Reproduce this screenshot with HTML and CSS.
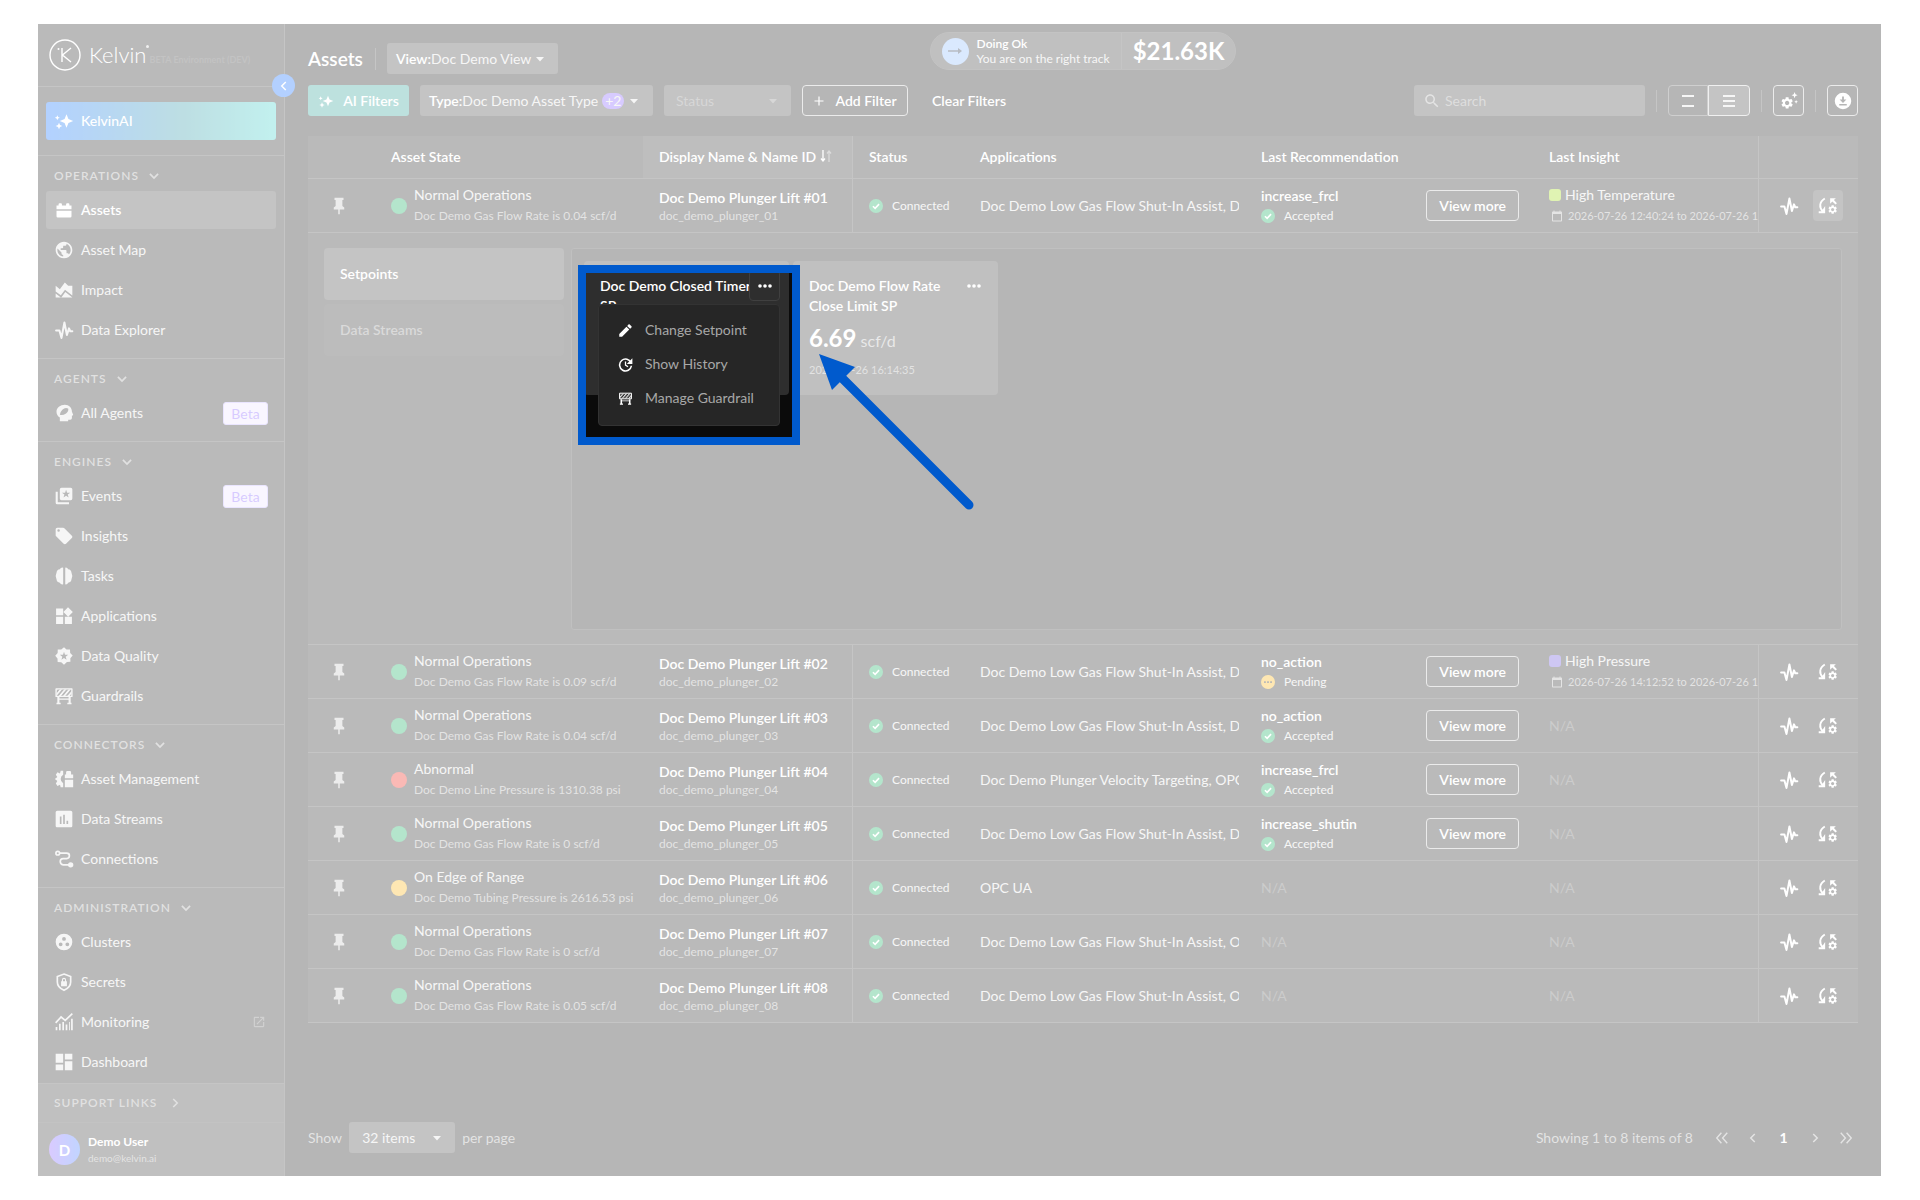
FILE: index.html
```html
<!DOCTYPE html>
<html lang="en">
<head>
<meta charset="utf-8">
<title>Assets - Kelvin</title>
<meta name="viewport" content="width=device-width, initial-scale=1">
<link rel="stylesheet" href="styles.css">
</head>
<body>
<svg class="sprite" aria-hidden="true">
  <defs>
    <pattern id="hatch" width="4" height="4" patternUnits="userSpaceOnUse" patternTransform="rotate(40)"><rect width="2" height="4" fill="currentColor"/></pattern>
    <symbol id="i-spark" viewBox="0 0 24 24"><path d="M15 4l2.300 5.700L23 12l-5.700 2.300L15 20l-2.300-5.700L7 12l5.700-2.300zM6 14l1.200 2.800L10 18l-2.800 1.200L6 22l-1.200-2.800L2 18l2.800-1.200zM4 5l.9 2.100L7 8l-2.100.9L4 11l-.9-2.100L1 8l2.100-.9z"/></symbol>
    <symbol id="i-asset" viewBox="0 0 24 24"><path d="M3 11V6.500h2.500V5.200Q5.500 4 6.700 4h1.600Q9.500 4 9.500 5.200v1.300h5V5.200q0-1.200 1.200-1.200h1.600q1.200 0 1.200 1.200v1.300H21V11zM3 13h18v6.500q0 1.500-1.500 1.500h-15Q3 21 3 19.500z"/></symbol>
    <symbol id="i-globe" viewBox="0 0 24 24"><path d="M12 2C6.480 2 2 6.480 2 12s4.480 10 10 10 10-4.480 10-10S17.520 2 12 2zm-1 17.930c-3.950-.49-7-3.850-7-7.930 0-.62.08-1.210.21-1.790L9 15v1c0 1.100.9 2 2 2v1.930zm6.900-2.540c-.26-.81-1-1.390-1.900-1.390h-1v-3c0-.55-.45-1-1-1H8v-2h2c.55 0 1-.45 1-1V7h2c1.100 0 2-.9 2-2v-.41c2.930 1.190 5 4.060 5 7.410 0 2.080-.8 3.970-2.100 5.390z"/></symbol>
    <symbol id="i-impact" viewBox="0 0 24 24"><path d="M2 7l5 4 6-8 4 4h5v11.500l-8.800-6.800-5 6.700L2 13.700zM2 21v-4.800l6.600 5 5-6.700L22 21z"/></symbol>
    <symbol id="i-pulse" viewBox="0 0 24 24"><path d="M2.500 12.500h4L9 21.500 12.500 3l3 15 2.500-8 1.500 3.500h2.500" fill="none" stroke="currentColor" stroke-width="2.400" stroke-linejoin="round" stroke-linecap="round"/></symbol>
    <symbol id="i-agent" viewBox="0 0 24 24"><path fill-rule="evenodd" d="M13 2c5 0 8.500 3.500 8.500 8.500L23 14q0 1-1.500 1V18q0 2-2 2H17v2H7v-4.500Q3 15 3 10.500C3 5.500 7.500 2 13 2zM7 14q3 1.500 7.500-1.500Q18 9.500 17 6.500 13 5 10 8q-3 3-3 6z"/></symbol>
    <symbol id="i-events" viewBox="0 0 24 24"><path fill-rule="evenodd" d="M9 2h11q2 0 2 2v11q0 2-2 2H9q-2 0-2-2V4q0-2 2-2zm5.500 2.500l-1.200 3.600H9.500l3 2.200-1.100 3.600 3.100-2.200 3.100 2.200-1.100-3.600 3-2.200h-3.800z"/><path d="M2 7h2.500v12.500H18V22H4q-2 0-2-2z"/></symbol>
    <symbol id="i-tag" viewBox="0 0 24 24"><path d="M5.500 7A1.500 1.500 0 0 1 4 5.500 1.500 1.500 0 0 1 5.500 4 1.500 1.500 0 0 1 7 5.500 1.500 1.500 0 0 1 5.500 7m15.910 4.580l-9-9C12.050 2.220 11.550 2 11 2H4c-1.110 0-2 .89-2 2v7c0 .55.22 1.050.59 1.410l8.990 9c.37.36.87.59 1.420.59s1.050-.23 1.410-.59l7-7c.37-.36.59-.86.59-1.410 0-.56-.23-1.060-.59-1.420z"/></symbol>
    <symbol id="i-tasks" viewBox="0 0 24 24"><path d="M11 2v20Q8 22.500 7 20q-3.500 0-4-4-2-4 0-8 .5-3.500 4-4 1-2.500 4-2zM13.500 2v20q2.500.5 3.500-2 3.500 0 4-4 2-4 0-8-.5-3.500-4-4-1-2.500-3.500-2z"/></symbol>
    <symbol id="i-apps" viewBox="0 0 24 24"><path d="M13 13v8.500h8.500V13zM2.500 21.500H11V13H2.500zM2.500 3v8H11V3zm14.300-1.500L11.300 7.200 17 12.800l5.600-5.600z"/></symbol>
    <symbol id="i-quality" viewBox="0 0 24 24"><path fill-rule="evenodd" d="M12 1.500l3 2.800 4.200-.2.200 4.200 3 3.200-2.800 3.200.1 4.300-4.200.2-3.500 3.300-3.300-3-4.300-.2-.2-4.200-2.700-3.400 2.900-3.200.1-4.200 4.200-.2zM12 7l-1.200 3.600H7l3 2.200-1.100 3.700 3.100-2.200 3.100 2.200-1.100-3.700 3-2.200h-3.800z"/></symbol>
    <symbol id="i-guard" viewBox="0 0 24 24"><path fill="url(#hatch)" d="M3 4h18v8H3z"/><path d="M2.500 3.500h19v9h-19z" fill="none" stroke="currentColor" stroke-width="1.600" stroke-linejoin="round"/><path d="M4 13h2.500v7H8v2H3v-2h1zM17.500 13H20v7h1v2h-5v-2h1.500zM4 15h16v1.500H4z"/></symbol>
    <symbol id="i-manage" viewBox="0 0 24 24"><path d="M11 2v5q-3 1.500-3 5t3 5v5H8l-.8-3-3 1.500-2-3L4 14.500 1 12l3-2.500L2.200 6.800l2-3 3 1.700L8 2zM13 11V6.500h1.500V4q0-1.500 1.500-1.500h3q1.500 0 1.500 1.500v2.500H23V11zM13 13h10v9H13z"/></symbol>
    <symbol id="i-chart" viewBox="0 0 24 24"><path d="M20 2H4c-1.100 0-2 .9-2 2v16c0 1.100.9 2 2 2h16c1.100 0 2-.9 2-2V4c0-1.100-.9-2-2-2zM9 18H7V9h2zm4 0h-2V7h2zm4 0h-2v-4h2z"/></symbol>
    <symbol id="i-connect" viewBox="0 0 24 24"><g fill="none" stroke="currentColor" stroke-width="2"><circle cx="4.500" cy="5" r="2.200"/><path d="M7 5h8q3.500 0 3.500 3T15 11.500h-4Q7.500 11.500 7.500 15T11 19h7"/></g><circle cx="20" cy="19" r="3.200"/></symbol>
    <symbol id="i-cluster" viewBox="0 0 24 24"><path fill-rule="evenodd" d="M12 2a10 10 0 1 0 0 20 10 10 0 0 0 0-20zM12 6a2.300 2.300 0 1 1 0 4.600A2.300 2.300 0 0 1 12 6zM8 12.500a2.300 2.300 0 1 1 0 4.600 2.300 2.300 0 0 1 0-4.600zm8 0a2.300 2.300 0 1 1 0 4.600 2.300 2.300 0 0 1 0-4.600z"/></symbol>
    <symbol id="i-secret" viewBox="0 0 24 24"><path d="M12 2.500l8 3v6.500q0 6.500-8 10Q4 18.500 4 12V5.500z" fill="none" stroke="currentColor" stroke-width="2"/><path fill-rule="evenodd" d="M8.500 11h1V9.500a2.500 2.500 0 0 1 5 0V11h1v6h-7zm2.300 0h2.400V9.500a1.200 1.200 0 0 0-2.400 0z"/></symbol>
    <symbol id="i-monitor" viewBox="0 0 24 24"><path d="M2 13l6.500-7 5 4L22 2" fill="none" stroke="currentColor" stroke-width="2"/><path d="M2 18h2v4H2zM6 14h2v8H6zM10 12h2v10h-2zM14 15h2v7h-2zM18 12h1v10h-1zM20.500 8h2v14h-2z"/></symbol>
    <symbol id="i-dash" viewBox="0 0 24 24"><path d="M2 13h9V2H2zm0 9h9v-7H2zm11 0h9V11h-9zm0-20v7h9V2z"/></symbol>
    <symbol id="i-ext" viewBox="0 0 24 24"><path d="M19 19H5V5h7V3H5c-1.110 0-2 .9-2 2v14c0 1.100.89 2 2 2h14c1.100 0 2-.9 2-2v-7h-2zM14 3v2h3.590l-9.830 9.830 1.410 1.410L19 6.410V10h2V3z"/></symbol>
    <symbol id="i-down" viewBox="0 0 24 24"><path d="M5 8.500l7 7 7-7" fill="none" stroke="currentColor" stroke-width="3"/></symbol>
    <symbol id="i-right" viewBox="0 0 24 24"><path d="M8.500 4l8 8-8 8" fill="none" stroke="currentColor" stroke-width="3"/></symbol>
    <symbol id="i-left" viewBox="0 0 24 24"><path d="M15.500 4l-8 8 8 8" fill="none" stroke="currentColor" stroke-width="3"/></symbol>
    <symbol id="i-first" viewBox="0 0 24 24"><path d="M11 3l-8 9 8 9M21 3l-8 9 8 9" fill="none" stroke="currentColor" stroke-width="2.400"/></symbol>
    <symbol id="i-last" viewBox="0 0 24 24"><path d="M3 3l8 9-8 9M13 3l8 9-8 9" fill="none" stroke="currentColor" stroke-width="2.400"/></symbol>
    <symbol id="i-caret" viewBox="0 0 10 6"><path d="M1 1h8L5 5.500z"/></symbol>
    <symbol id="i-pin" viewBox="0 0 24 24"><path d="M16.500 12V4H18V1H6v3h1.500v8L5 14v2.500h6V23h2v-6.500h6V14z"/></symbol>
    <symbol id="i-plus" viewBox="0 0 24 24"><path d="M12 3v18M3 12h18" fill="none" stroke="currentColor" stroke-width="2.400"/></symbol>
    <symbol id="i-search" viewBox="0 0 24 24"><path d="M15.500 14h-.79l-.28-.27C15.410 12.590 16 11.110 16 9.500 16 5.910 13.090 3 9.500 3S3 5.910 3 9.500 5.910 16 9.500 16c1.610 0 3.090-.59 4.230-1.570l.27.28v.79l5 4.990L20.490 19zm-6 0C7.010 14 5 11.990 5 9.500S7.010 5 9.500 5 14 7.010 14 9.500 11.990 14 9.500 14z"/></symbol>
    <symbol id="i-two" viewBox="0 0 14 14"><path d="M1 1h12v2H1zM1 11h12v2H1z"/></symbol>
    <symbol id="i-three" viewBox="0 0 14 14"><path d="M1 1h12v2H1zM1 6h12v2H1zM1 11h12v2H1z"/></symbol>
    <symbol id="i-cog" viewBox="0 0 24 24"><path d="M19.140 12.940c.04-.3.060-.61.060-.94 0-.32-.02-.64-.07-.94l2.030-1.580c.18-.14.23-.41.12-.61l-1.920-3.320c-.12-.22-.37-.29-.59-.22l-2.390.96c-.5-.38-1.030-.7-1.620-.94l-.36-2.540c-.04-.24-.24-.41-.48-.41h-3.840c-.24 0-.43.17-.47.41l-.36 2.540c-.59.24-1.130.57-1.620.94l-2.390-.96c-.22-.08-.47 0-.59.22L2.740 8.870c-.12.21-.08.47.12.61l2.030 1.580c-.05.3-.09.63-.09.94s.02.64.07.94l-2.030 1.580c-.18.14-.23.41-.12.61l1.920 3.320c.12.22.37.29.59.22l2.390-.96c.5.38 1.030.7 1.620.94l.36 2.540c.05.24.24.41.48.41h3.840c.24 0 .44-.17.47-.41l.36-2.540c.59-.24 1.130-.56 1.620-.94l2.390.96c.22.08.47 0 .59-.22l1.920-3.320c.12-.22.07-.47-.12-.61zM12 15.600c-1.980 0-3.600-1.620-3.600-3.600s1.620-3.600 3.600-3.600 3.600 1.620 3.600 3.600-1.620 3.600-3.600 3.600z"/></symbol>
    <symbol id="i-cogs" viewBox="0 0 24 24"><use href="#i-cog" x="0" y="5" width="19" height="19"/><path d="M19.500 0l1.100 3 2.900 1.200-2.900 1.200-1.100 3-1.200-3-2.900-1.200L18.300 3zM21.500 10.500l.8 1.700 1.700.8-1.700.8-.8 1.700-.8-1.700-1.700-.8 1.700-.8z"/></symbol>
    <symbol id="i-dl" viewBox="0 0 24 24"><path fill-rule="evenodd" d="M12 1a11 11 0 1 0 0 22 11 11 0 0 0 0-22zm-1.200 5h2.400v4h3.300L12 14.500 7.500 10h3.300zM7 16h10v2H7z"/></symbol>
    <symbol id="i-sync" viewBox="0 0 28 24"><path d="M9.500 1.500C2 6 1 14 7 20" fill="none" stroke="currentColor" stroke-width="2.600"/><path d="M10 12v10H1v-2.500h4zM17 1h8l-2.700 2.700L26.500 8l-2 2-4.400-4.200L17 9z"/><use href="#i-cog" x="13" y="9.500" width="15" height="15"/></symbol>
    <symbol id="i-check" viewBox="0 0 16 16"><circle class="ok-fill" cx="8" cy="8" r="8"/><path d="M4.500 8.300L7 10.700l4.500-4.800" fill="none" stroke="#fff" stroke-width="1.800"/></symbol>
    <symbol id="i-pend" viewBox="0 0 16 16"><circle class="warn-fill" cx="8" cy="8" r="8"/><path d="M3.500 7h2v2h-2zM7 7h2v2H7zM10.500 7h2v2h-2z" fill="#111"/></symbol>
    <symbol id="i-cal" viewBox="0 0 24 24"><path d="M20 3h-1V1h-2v2H7V1H5v2H4c-1.100 0-2 .9-2 2v16c0 1.100.9 2 2 2h16c1.100 0 2-.9 2-2V5c0-1.100-.9-2-2-2zm0 18H4V8h16z"/></symbol>
    <symbol id="i-dots" viewBox="0 0 14 4"><circle cx="2" cy="2" r="1.800"/><circle cx="7" cy="2" r="1.800"/><circle cx="12" cy="2" r="1.800"/></symbol>
    <symbol id="i-edit" viewBox="0 0 24 24"><path d="M2 17.500V22h4.500L18 10.500 13.500 6zM21.500 7.200c.6-.6.6-1.300 0-1.900l-2.800-2.800c-.6-.6-1.300-.6-1.900 0L14.700 4.600l4.700 4.700z"/></symbol>
    <symbol id="i-hist" viewBox="0 0 24 24"><path d="M21 9.500A9.500 9.500 0 1 0 21.500 14" fill="none" stroke="currentColor" stroke-width="2.500"/><path d="M23 2v9h-9z"/><path d="M12 7v6l4 2.500" fill="none" stroke="currentColor" stroke-width="2"/></symbol>
  </defs>
</svg>

<div class="app">
  <aside class="sidebar">
    <div class="brand">
      <svg class="brand-mark" viewBox="0 0 32 32" aria-hidden="true"><g fill="none" stroke="#fff" stroke-width="1.400"><circle cx="16" cy="16" r="15"/><path d="M13 9v14M22 9l-8.500 7L22 23"/></g><circle cx="9.500" cy="10" r="1" fill="#fff"/></svg>
      <span class="brand-name">Kelvin<i></i></span>
      <span class="brand-env">BETA Environment (DEV)</span>
    </div>
    <button class="collapse" aria-label="Collapse sidebar"><svg class="ic12"><use href="#i-left"/></svg></button>
    <div class="ai-wrap"><a class="nav-item ai" href="#"><svg class="ic20"><use href="#i-spark"/></svg>KelvinAI</a></div>
    <nav>
      <section class="group">
        <button class="group-head">OPERATIONS <svg class="ic14"><use href="#i-down"/></svg></button>
        <a class="nav-item active" href="#"><svg class="ic20"><use href="#i-asset"/></svg>Assets</a>
        <a class="nav-item" href="#"><svg class="ic20"><use href="#i-globe"/></svg>Asset Map</a>
        <a class="nav-item" href="#"><svg class="ic20"><use href="#i-impact"/></svg>Impact</a>
        <a class="nav-item" href="#"><svg class="ic20"><use href="#i-pulse"/></svg>Data Explorer</a>
      </section>
      <section class="group">
        <button class="group-head">AGENTS <svg class="ic14"><use href="#i-down"/></svg></button>
        <a class="nav-item" href="#"><svg class="ic20"><use href="#i-agent"/></svg>All Agents<span class="beta">Beta</span></a>
      </section>
      <section class="group">
        <button class="group-head">ENGINES <svg class="ic14"><use href="#i-down"/></svg></button>
        <a class="nav-item" href="#"><svg class="ic20"><use href="#i-events"/></svg>Events<span class="beta">Beta</span></a>
        <a class="nav-item" href="#"><svg class="ic20"><use href="#i-tag"/></svg>Insights</a>
        <a class="nav-item" href="#"><svg class="ic20"><use href="#i-tasks"/></svg>Tasks</a>
        <a class="nav-item" href="#"><svg class="ic20"><use href="#i-apps"/></svg>Applications</a>
        <a class="nav-item" href="#"><svg class="ic20"><use href="#i-quality"/></svg>Data Quality</a>
        <a class="nav-item" href="#"><svg class="ic20"><use href="#i-guard"/></svg>Guardrails</a>
      </section>
      <section class="group">
        <button class="group-head">CONNECTORS <svg class="ic14"><use href="#i-down"/></svg></button>
        <a class="nav-item" href="#"><svg class="ic20"><use href="#i-manage"/></svg>Asset Management</a>
        <a class="nav-item" href="#"><svg class="ic20"><use href="#i-chart"/></svg>Data Streams</a>
        <a class="nav-item" href="#"><svg class="ic20"><use href="#i-connect"/></svg>Connections</a>
      </section>
      <section class="group last">
        <button class="group-head">ADMINISTRATION <svg class="ic14"><use href="#i-down"/></svg></button>
        <a class="nav-item" href="#"><svg class="ic20"><use href="#i-cluster"/></svg>Clusters</a>
        <a class="nav-item" href="#"><svg class="ic20"><use href="#i-secret"/></svg>Secrets</a>
        <a class="nav-item" href="#"><svg class="ic20"><use href="#i-monitor"/></svg>Monitoring<svg class="ic14 ext"><use href="#i-ext"/></svg></a>
        <a class="nav-item" href="#"><svg class="ic20"><use href="#i-dash"/></svg>Dashboard</a>
      </section>
    </nav>
    <div class="side-foot">
      <button class="group-head support">SUPPORT LINKS <svg class="ic12"><use href="#i-right"/></svg></button>
      <div class="user"><span class="avatar">D</span><div><div class="user-name">Demo User</div><div class="user-mail">demo@kelvin.ai</div></div></div>
    </div>
  </aside>

  <main class="main">
    <header class="top">
      <div class="title-row">
        <h1>Assets</h1><span class="vr"></span>
        <div class="field view"><label for="view">View:</label><select id="view"><option>Doc Demo View</option></select><svg class="caret"><use href="#i-caret"/></svg></div>
      </div>
      <div class="score">
        <span class="score-icon"><svg viewBox="0 0 14 8"><path d="M0 3.200h10V1l4 3-4 3V4.800H0z"/></svg></span>
        <div class="score-text"><b>Doing Ok</b><span>You are on the right track</span></div>
        <strong class="score-sum">$21.63K</strong>
      </div>
    </header>

    <div class="filters">
      <button class="btn-ai"><svg class="ic16"><use href="#i-spark"/></svg>AI Filters</button>
      <button class="field type" aria-haspopup="listbox"><b>Type:</b>Doc Demo Asset Type<span class="count">+2</span><svg class="caret"><use href="#i-caret"/></svg></button>
      <div class="field status-f"><select aria-label="Status"><option>Status</option></select><svg class="caret"><use href="#i-caret"/></svg></div>
      <button class="btn-line add"><svg class="ic12"><use href="#i-plus"/></svg>Add Filter</button>
      <button class="btn-text">Clear Filters</button>
      <div class="tools">
        <label class="field search"><svg class="ic18"><use href="#i-search"/></svg><input type="search" placeholder="Search" aria-label="Search"></label>
        <span class="vr"></span>
        <div class="toggle"><button aria-label="Comfortable rows"><svg class="ic14"><use href="#i-two"/></svg></button><button class="on" aria-label="Compact rows"><svg class="ic14"><use href="#i-three"/></svg></button></div>
        <span class="vr"></span>
        <button class="btn-line sq" aria-label="Table settings"><svg class="ic18"><use href="#i-cogs"/></svg></button>
        <span class="vr"></span>
        <button class="btn-line sq" aria-label="Download"><svg class="ic18"><use href="#i-dl"/></svg></button>
      </div>
    </div>

    <table class="assets">
      <colgroup><col class="c-pin"><col class="c-state"><col class="c-name"><col class="c-status"><col class="c-apps"><col class="c-rec"><col><col class="c-act"></colgroup>
      <thead><tr><th aria-label="Pinned"></th><th>Asset State</th><th class="sorted">Display Name &amp; Name ID <svg class="sort" viewBox="0 0 12 12"><path d="M3 0v11M1 8.500l2 2.500 2-2.500" fill="none" stroke="#fff" stroke-width="1.300"/><path d="M9 12V1M7 3.500L9 1l2 2.500" fill="none" stroke="#888" stroke-width="1.300"/></svg></th><th class="vb">Status</th><th>Applications</th><th>Last Recommendation</th><th>Last Insight</th><th class="vb" aria-label="Actions"></th></tr></thead>
      <tbody>
        <tr>
          <td class="pin"><svg class="ic18"><use href="#i-pin"/></svg></td>
          <td><div class="state"><i class="dot ok"></i><div><p>Normal Operations</p><small>Doc Demo Gas Flow Rate is 0.04 scf/d</small></div></div></td>
          <td class="name"><b>Doc Demo Plunger Lift #01</b><small>doc_demo_plunger_01</small></td>
          <td class="vb"><span class="st"><svg><use href="#i-check"/></svg>Connected</span></td>
          <td class="apps"><div class="clip">Doc Demo Low Gas Flow Shut-In Assist, Do</div></td>
          <td><div class="rec"><div><b>increase_frcl</b><span class="st"><svg><use href="#i-check"/></svg>Accepted</span></div><button class="btn-line">View more</button></div></td>
          <td class="ins"><p><i class="sq-dot lime"></i>High Temperature</p><small><svg class="ic14"><use href="#i-cal"/></svg>2026-07-26 12:40:24 to 2026-07-26 13</small></td>
          <td class="vb act"><div><button aria-label="Explore"><svg class="ic20"><use href="#i-pulse"/></svg></button><button class="on" aria-label="Controls" aria-expanded="true"><svg class="ic-sync"><use href="#i-sync"/></svg></button></div></td>
        </tr>
        <tr class="detail"><td colspan="8">
          <div class="detail-grid">
            <div class="tabs"><button class="on">Setpoints</button><button>Data Streams</button></div>
            <div class="panel">
              <article class="card">
                <h2>Doc Demo Closed Timer SP</h2>
                <button class="more framed" aria-label="More actions"><svg><use href="#i-dots"/></svg></button>
                <div class="menu" role="menu">
                  <button role="menuitem"><svg class="ic14"><use href="#i-edit"/></svg>Change Setpoint</button>
                  <button role="menuitem"><svg class="ic14"><use href="#i-hist"/></svg>Show History</button>
                  <button role="menuitem"><svg class="ic14"><use href="#i-guard"/></svg>Manage Guardrail</button>
                </div>
                <div class="spotlight"></div>
                <svg class="pointer" viewBox="0 0 160 160" aria-hidden="true"><path d="M22 22L153 153" stroke="#005acd" stroke-width="9" stroke-linecap="round"/><path d="M3 2l36 13L16 38z" fill="#005acd"/></svg>
              </article>
              <article class="card">
                <h2>Doc Demo Flow Rate Close Limit SP</h2>
                <button class="more" aria-label="More actions"><svg><use href="#i-dots"/></svg></button>
                <p class="value"><b>6.69</b> scf/d</p>
                <time>2026-07-26 16:14:35</time>
              </article>
            </div>
          </div>
        </td></tr>
        <tr>
          <td class="pin"><svg class="ic18"><use href="#i-pin"/></svg></td>
          <td><div class="state"><i class="dot ok"></i><div><p>Normal Operations</p><small>Doc Demo Gas Flow Rate is 0.09 scf/d</small></div></div></td>
          <td class="name"><b>Doc Demo Plunger Lift #02</b><small>doc_demo_plunger_02</small></td>
          <td class="vb"><span class="st"><svg><use href="#i-check"/></svg>Connected</span></td>
          <td class="apps"><div class="clip">Doc Demo Low Gas Flow Shut-In Assist, Do</div></td>
          <td><div class="rec"><div><b>no_action</b><span class="st"><svg><use href="#i-pend"/></svg>Pending</span></div><button class="btn-line">View more</button></div></td>
          <td class="ins"><p><i class="sq-dot violet"></i>High Pressure</p><small><svg class="ic14"><use href="#i-cal"/></svg>2026-07-26 14:12:52 to 2026-07-26 14</small></td>
          <td class="vb act"><div><button aria-label="Explore"><svg class="ic20"><use href="#i-pulse"/></svg></button><button aria-label="Controls"><svg class="ic-sync"><use href="#i-sync"/></svg></button></div></td>
        </tr>
        <tr>
          <td class="pin"><svg class="ic18"><use href="#i-pin"/></svg></td>
          <td><div class="state"><i class="dot ok"></i><div><p>Normal Operations</p><small>Doc Demo Gas Flow Rate is 0.04 scf/d</small></div></div></td>
          <td class="name"><b>Doc Demo Plunger Lift #03</b><small>doc_demo_plunger_03</small></td>
          <td class="vb"><span class="st"><svg><use href="#i-check"/></svg>Connected</span></td>
          <td class="apps"><div class="clip">Doc Demo Low Gas Flow Shut-In Assist, Do</div></td>
          <td><div class="rec"><div><b>no_action</b><span class="st"><svg><use href="#i-check"/></svg>Accepted</span></div><button class="btn-line">View more</button></div></td>
          <td class="na">N/A</td>
          <td class="vb act"><div><button aria-label="Explore"><svg class="ic20"><use href="#i-pulse"/></svg></button><button aria-label="Controls"><svg class="ic-sync"><use href="#i-sync"/></svg></button></div></td>
        </tr>
        <tr>
          <td class="pin"><svg class="ic18"><use href="#i-pin"/></svg></td>
          <td><div class="state"><i class="dot bad"></i><div><p>Abnormal</p><small>Doc Demo Line Pressure is 1310.38 psi</small></div></div></td>
          <td class="name"><b>Doc Demo Plunger Lift #04</b><small>doc_demo_plunger_04</small></td>
          <td class="vb"><span class="st"><svg><use href="#i-check"/></svg>Connected</span></td>
          <td class="apps"><div class="clip">Doc Demo Plunger Velocity Targeting, OPC</div></td>
          <td><div class="rec"><div><b>increase_frcl</b><span class="st"><svg><use href="#i-check"/></svg>Accepted</span></div><button class="btn-line">View more</button></div></td>
          <td class="na">N/A</td>
          <td class="vb act"><div><button aria-label="Explore"><svg class="ic20"><use href="#i-pulse"/></svg></button><button aria-label="Controls"><svg class="ic-sync"><use href="#i-sync"/></svg></button></div></td>
        </tr>
        <tr>
          <td class="pin"><svg class="ic18"><use href="#i-pin"/></svg></td>
          <td><div class="state"><i class="dot ok"></i><div><p>Normal Operations</p><small>Doc Demo Gas Flow Rate is 0 scf/d</small></div></div></td>
          <td class="name"><b>Doc Demo Plunger Lift #05</b><small>doc_demo_plunger_05</small></td>
          <td class="vb"><span class="st"><svg><use href="#i-check"/></svg>Connected</span></td>
          <td class="apps"><div class="clip">Doc Demo Low Gas Flow Shut-In Assist, Do</div></td>
          <td><div class="rec"><div><b>increase_shutin</b><span class="st"><svg><use href="#i-check"/></svg>Accepted</span></div><button class="btn-line">View more</button></div></td>
          <td class="na">N/A</td>
          <td class="vb act"><div><button aria-label="Explore"><svg class="ic20"><use href="#i-pulse"/></svg></button><button aria-label="Controls"><svg class="ic-sync"><use href="#i-sync"/></svg></button></div></td>
        </tr>
        <tr>
          <td class="pin"><svg class="ic18"><use href="#i-pin"/></svg></td>
          <td><div class="state"><i class="dot warn"></i><div><p>On Edge of Range</p><small>Doc Demo Tubing Pressure is 2616.53 psi</small></div></div></td>
          <td class="name"><b>Doc Demo Plunger Lift #06</b><small>doc_demo_plunger_06</small></td>
          <td class="vb"><span class="st"><svg><use href="#i-check"/></svg>Connected</span></td>
          <td class="apps"><div class="clip">OPC UA</div></td>
          <td class="na">N/A</td>
          <td class="na">N/A</td>
          <td class="vb act"><div><button aria-label="Explore"><svg class="ic20"><use href="#i-pulse"/></svg></button><button aria-label="Controls"><svg class="ic-sync"><use href="#i-sync"/></svg></button></div></td>
        </tr>
        <tr>
          <td class="pin"><svg class="ic18"><use href="#i-pin"/></svg></td>
          <td><div class="state"><i class="dot ok"></i><div><p>Normal Operations</p><small>Doc Demo Gas Flow Rate is 0 scf/d</small></div></div></td>
          <td class="name"><b>Doc Demo Plunger Lift #07</b><small>doc_demo_plunger_07</small></td>
          <td class="vb"><span class="st"><svg><use href="#i-check"/></svg>Connected</span></td>
          <td class="apps"><div class="clip">Doc Demo Low Gas Flow Shut-In Assist, OP</div></td>
          <td class="na">N/A</td>
          <td class="na">N/A</td>
          <td class="vb act"><div><button aria-label="Explore"><svg class="ic20"><use href="#i-pulse"/></svg></button><button aria-label="Controls"><svg class="ic-sync"><use href="#i-sync"/></svg></button></div></td>
        </tr>
        <tr>
          <td class="pin"><svg class="ic18"><use href="#i-pin"/></svg></td>
          <td><div class="state"><i class="dot ok"></i><div><p>Normal Operations</p><small>Doc Demo Gas Flow Rate is 0.05 scf/d</small></div></div></td>
          <td class="name"><b>Doc Demo Plunger Lift #08</b><small>doc_demo_plunger_08</small></td>
          <td class="vb"><span class="st"><svg><use href="#i-check"/></svg>Connected</span></td>
          <td class="apps"><div class="clip">Doc Demo Low Gas Flow Shut-In Assist, OP</div></td>
          <td class="na">N/A</td>
          <td class="na">N/A</td>
          <td class="vb act"><div><button aria-label="Explore"><svg class="ic20"><use href="#i-pulse"/></svg></button><button aria-label="Controls"><svg class="ic-sync"><use href="#i-sync"/></svg></button></div></td>
        </tr>
      </tbody>
    </table>

    <footer class="pager">
      <label for="size">Show</label>
      <div class="field size"><select id="size"><option>32 items</option></select><svg class="caret"><use href="#i-caret"/></svg></div>
      <span>per page</span>
      <span class="total">Showing 1 to 8 items of 8</span>
      <div class="pages">
        <button aria-label="First page"><svg class="ic14"><use href="#i-first"/></svg></button>
        <button aria-label="Previous page"><svg class="ic12"><use href="#i-left"/></svg></button>
        <button class="on">1</button>
        <button aria-label="Next page"><svg class="ic12"><use href="#i-right"/></svg></button>
        <button aria-label="Last page"><svg class="ic14"><use href="#i-last"/></svg></button>
      </div>
    </footer>
  </main>
</div>
</body>
</html>
```
FILE: styles.css
```css
:root {
  --bg: #0b0b0b;
  --surface: #191919;
  --field: #393939;
  --line: #3f3f3f;
  --muted: #a4a4a4;
  --text: #e2e2e2;
  --blue: #005acd;
}
* { box-sizing: border-box; }
body {
  margin: 24px 39px 24px 38px;
  background: #fff;
  color: var(--text);
  font: 14px/20px Lato, "Open Sans", sans-serif;
}
h1, h2, p { margin: 0; font-weight: inherit; }
b { font-weight: 600; }
a { color: inherit; text-decoration: none; }
button, select, input { font: inherit; color: inherit; border: 0; background: none; padding: 0; margin: 0; }
svg { fill: currentColor; flex: none; display: block; }
small { font-size: 12px; line-height: 16px; color: var(--muted); display: block; white-space: nowrap; }
.sprite { position: absolute; width: 0; height: 0; }
.ic12 { width: 12px; height: 12px; }
.ic14 { width: 14px; height: 14px; }
.ic16 { width: 16px; height: 16px; }
.ic18 { width: 18px; height: 18px; }
.ic20 { width: 20px; height: 20px; }
.ic-sync { width: 20px; height: 18px; }
.ok-fill { fill: #05a856; }
.warn-fill { fill: #fab000; }

.app {
  display: flex;
  min-height: calc(100vh - 48px);
  overflow: hidden;
  position: relative;
  background: var(--bg);
}

/* sidebar */
.sidebar {
  position: relative;
  flex: none;
  width: 247px;
  display: flex;
  flex-direction: column;
  background: var(--surface);
  border-right: 1px solid var(--line);
}
.brand { height: 63px; padding: 0 11px; display: flex; align-items: center; border-bottom: 1px solid var(--line); color: #fff; }
.brand-mark { width: 32px; height: 32px; }
.brand-name { margin-left: 8px; font-size: 22px; font-weight: 300; line-height: 32px; display: flex; }
.brand-name i { width: 3px; height: 3px; margin-top: 6px; border-radius: 50%; background: #ccc; }
.brand-env { padding-top: 10px; font-size: 9px; line-height: 12px; font-weight: 700; color: #363636; white-space: nowrap; }
.collapse {
  position: absolute; top: 50px; right: -11px; z-index: 1;
  width: 23px; height: 23px; border-radius: 50%;
  display: grid; place-items: center;
  background: #0062ff; color: #fff;
}
.ai-wrap { padding: 15px 8px; }
.nav-item { height: 38px; margin-bottom: 2px; padding: 0 8px; display: flex; align-items: center; gap: 7px; border-radius: 3px; }
.nav-item.ai { margin: 0; background: linear-gradient(90deg, #0066ff, #2391a0 60%, #33cfc8); color: #fff; font-weight: 500; }
.group { padding: 0 8px 7px; border-top: 1px solid var(--line); }
.group.last { padding-bottom: 0; }
.group-head {
  height: 35px; padding: 4px 0 0 8px; display: flex; align-items: center; gap: 8px;
  font-size: 12px; font-weight: 600; letter-spacing: 1px; color: #9c9c9c;
}
.nav-item.active { background: var(--field); color: #fff; font-weight: 600; }
.beta { margin-left: auto; width: 45px; height: 23px; line-height: 21px; border: 1px solid #b8a8ff; text-align: center; background: #ebe2ff; color: #7a50ff; border-radius: 3px; }
.ext { margin-left: auto; color: #666; margin-right: 2px; }
.side-foot { margin-top: auto; background: #2e2e2e; border-top: 1px solid var(--line); }
.group-head.support { width: 100%; height: 39px; padding: 0 16px; gap: 12px; border-bottom: 1px solid #383838; }
.user { height: 53px; padding: 0 11px; display: flex; align-items: center; gap: 8px; font-size: 12px; line-height: 16px; }
.user-name { font-weight: 700; color: #fff; }
.user-mail { font-size: 10px; color: var(--muted); }
.avatar { width: 31px; height: 31px; border-radius: 50%; display: grid; place-items: center; font-size: 15px; font-weight: 700; color: #fff; background: linear-gradient(90deg, #8050ff, #3070ff); }

/* main column */
.main { flex: 1; min-width: 0; display: flex; flex-direction: column; padding: 8px 23px 23px; }
.top { display: grid; grid-template-columns: 1fr auto 1fr; }
.title-row { display: flex; align-items: center; height: 31px; margin-top: 11px; }
h1 { font-size: 19px; font-weight: 600; color: #fff; margin-right: 12px; }
.vr { width: 1px; height: 22px; background: var(--line); }
.field { height: 31px; display: flex; align-items: center; border-radius: 3px; background: var(--field); padding: 0 9px; white-space: nowrap; }
.field select { appearance: none; flex: 1; min-width: 0; }
.field label, .field b { font-weight: 600; color: #fff; }
.caret { width: 10px; height: 6px; }
.view { width: 171px; margin-left: 11px; padding-right: 13px; }
.score { height: 38px; padding: 0 11px; display: flex; align-items: center; border-radius: 19px; background: #2c2c2c; border: 1px solid #363636; }
.score-icon { width: 27px; height: 27px; border-radius: 50%; display: grid; place-items: center; background: #82b4fa; color: #10203a; }
.score-icon svg { width: 14px; height: 8px; }
.score-text { margin: 0 11px 0 8px; font-size: 12px; line-height: 15px; display: flex; flex-direction: column; }
.score-text b { color: #fff; }
.score-sum { border-left: 1px solid var(--line); padding-left: 11px; font-size: 24px; line-height: 36px; font-weight: 700; color: #fff; }

.filters { display: flex; align-items: center; gap: 11px; margin-top: 11px; }
.btn-ai { width: 101px; height: 31px; display: flex; align-items: center; justify-content: center; gap: 9px; border-radius: 3px; background: #239a92; color: #fff; font-weight: 600; }
.type { width: 233px; }
.type .caret { margin: 0 5px 0 auto; }
.count { margin-left: 4px; width: 22px; height: 16px; line-height: 16px; border-radius: 8px; background: #7a50ff; text-align: center; }
.status-f { width: 127px; padding: 0 13px 0 12px; color: #7a7a7a; }
.btn-line { height: 31px; padding: 0 12px; display: flex; align-items: center; justify-content: center; gap: 10px; border: 1px solid #bbb; border-radius: 4px; color: #fff; font-weight: 600; white-space: nowrap; }
.add { width: 106px; }
.sq { width: 31px; padding: 0; }
.btn-text { margin-left: 13px; color: #fff; font-weight: 600; }
.tools { margin-left: auto; display: flex; align-items: center; gap: 11px; }
.search { width: 231px; gap: 4px; color: var(--muted); }
.search input { width: 100%; outline: 0; }
.search input::placeholder { color: #909090; opacity: 1; }
.toggle { display: flex; }
.toggle button { width: 40px; height: 31px; display: grid; place-items: center; border: 1px solid #606060; border-radius: 4px 0 0 4px; }
.toggle .on { width: 42px; border-color: #ccc; background: var(--field); border-radius: 0 4px 4px 0; }

/* table */
.assets { width: 100%; margin-top: 20px; table-layout: fixed; border-collapse: separate; border-spacing: 0; background: var(--surface); }
.c-pin { width: 67px; }
.c-state { width: 268px; }
.c-name { width: 209px; }
.c-status { width: 112px; }
.c-apps { width: 281px; }
.c-rec { width: 288px; }
.c-act { width: 100px; }
th { height: 43px; padding: 0 14px 0 16px; text-align: left; font-weight: 600; color: #fff; white-space: nowrap; border-bottom: 1px solid var(--line); }
td { height: 54px; padding: 0 14px 0 16px; border-bottom: 1px solid var(--line); }
.vb { border-left: 1px solid var(--line); }
.sorted { background: #262626; padding-right: 0; }
.sort { width: 12px; height: 12px; display: inline-block; }
.pin { padding: 0 0 0 22px; color: #c0c0c0; }
.state { display: flex; align-items: center; gap: 7px; line-height: 20px; white-space: nowrap; }
.state small { line-height: 22px; }
.dot { width: 16px; height: 16px; border-radius: 50%; flex: none; }
.ok { background: #05a856; }
.bad { background: #ee1408; }
.warn { background: #fab000; }
.name b { display: block; color: #fff; white-space: nowrap; }
.st { display: flex; align-items: center; gap: 9px; font-size: 12px; line-height: 20px; }
.st svg { width: 14px; height: 14px; }
.apps { padding-right: 6px; }
.clip { overflow: hidden; white-space: nowrap; }
.rec { display: flex; align-items: center; justify-content: space-between; }
.rec b { display: block; color: #fff; }
.ins { padding-right: 0; overflow: hidden; }
.ins p, .ins small { display: flex; align-items: center; line-height: 20px; }
.ins small { font-size: 11px; line-height: 22px; }
.ins .ic14 { width: 12px; height: 12px; margin: 0 5px 0 2px; }
.sq-dot { width: 12px; height: 12px; border-radius: 3px; margin-right: 4px; }
.lime { background: #98d700; }
.violet { background: #5a45d8; }
.na { color: #555; }
.act { padding: 0 15px; color: #fff; }
.act div { display: flex; gap: 8px; }
.act button { width: 31px; height: 31px; border-radius: 4px; display: grid; place-items: center; }
.act .on { background: var(--field); }

/* expanded row */
.detail td { padding: 15px 16px 14px; }
.detail-grid { display: flex; gap: 7px; }
.tabs { width: 240px; flex: none; display: flex; flex-direction: column; gap: 4px; }
.tabs button { height: 52px; padding: 0 16px; border-radius: 4px; text-align: left; font-weight: 600; background: #1f1f1f; color: #838383; }
.tabs .on { background: var(--field); color: #fff; }
.panel { flex: 1; min-height: 382px; padding: 12px; display: flex; align-items: flex-start; gap: 4px; background: var(--bg); border: 1px solid #2c2c2c; border-radius: 3px; }
.card { position: relative; width: 205px; height: 134px; padding: 15px 38px 0 16px; border-radius: 4px; background: #2e2e2e; color: #fff; }
.card h2 { font-size: 14px; font-weight: 600; }
.more { position: absolute; top: 9px; right: 9px; width: 31px; height: 31px; display: grid; place-items: center; border-radius: 4px; color: #fff; }
.more svg { width: 14px; height: 4px; }
.framed { border: 1px solid #404040; background: #2e2e2e; }
.value { margin-top: 8px; font-size: 16px; line-height: 28px; color: #b4b4b4; white-space: nowrap; }
.value b { font-size: 24px; font-weight: 700; color: #fff; }
.card time { display: block; margin-top: 7px; font-size: 11px; line-height: 16px; color: #a0a0a0; white-space: nowrap; }
.menu { position: absolute; top: 43px; left: 14px; width: 182px; padding: 8px 8px 10px; background: #262626; border: 1px solid #333; border-radius: 4px; color: #fff; }
.menu button { width: 100%; height: 34px; padding: 0 11px; display: flex; align-items: center; gap: 12px; color: #a8a8a8; }
.menu svg { width: 15px; height: 15px; color: #fff; }

/* guide: everything outside the blue frame is washed out */
.spotlight { position: absolute; z-index: 10; top: 4px; left: -6px; width: 222px; height: 180px; border: 8px solid var(--blue); box-shadow: 0 0 0 3000px rgba(255, 255, 255, .7); pointer-events: none; }
.pointer { position: absolute; z-index: 11; top: 91px; left: 232px; width: 160px; height: 160px; pointer-events: none; }

.pager { margin-top: auto; display: flex; align-items: center; gap: 7px; color: var(--muted); }
.size { width: 106px; padding: 0 13px; color: var(--text); }
.total { margin-left: auto; }
.pages { display: flex; margin: 0 -3px 0 6px; }
.pages button { width: 31px; height: 31px; display: grid; place-items: center; }
.pages .on { color: #fff; font-weight: 700; }
```
